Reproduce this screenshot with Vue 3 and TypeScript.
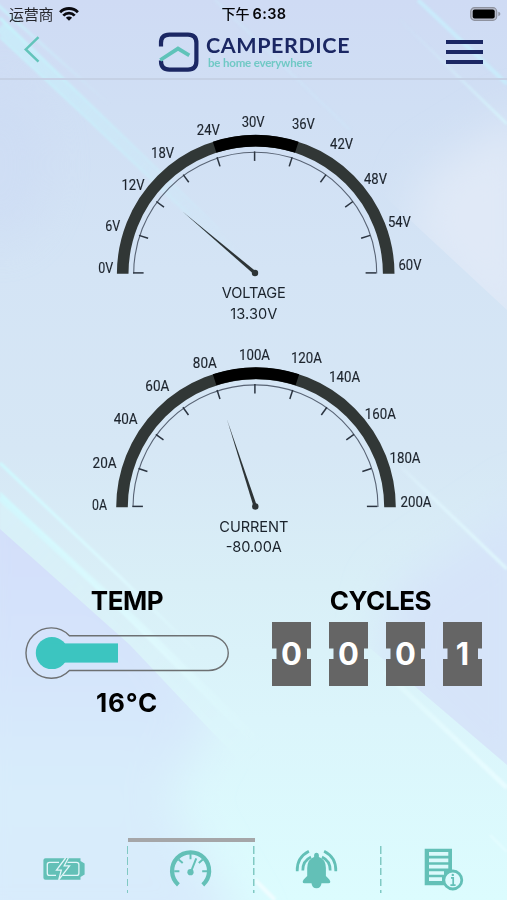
<script setup lang="ts">
interface Label { t: string; x: number; y: number; w: number }
interface Gauge {
  name: string
  value: string
  nameW: number
  valueW: number
  nameY: number
  valueY: number
  top: number
  height: number
  cx: number
  cy: number
  r: number
  tip: [number, number]
  labels: Label[]
}

const gauges: Gauge[] = [
  {
    name: 'VOLTAGE', value: '13.30V', nameW: 64, valueW: 47, nameY: 298.2, valueY: 318.7,
    top: 80, height: 250, cx: 255.7, cy: 273.8, r: 133, tip: [182.5, 211.5],
    labels: [
      { t: '0V', x: 105.7, y: 272.6, w: 15 },
      { t: '6V', x: 112.8, y: 231.2, w: 15 },
      { t: '12V', x: 133, y: 189.5, w: 23 },
      { t: '18V', x: 162.6, y: 157.5, w: 23 },
      { t: '24V', x: 208.3, y: 134.5, w: 23 },
      { t: '30V', x: 253.2, y: 126.7, w: 23 },
      { t: '36V', x: 303.4, y: 129, w: 23 },
      { t: '42V', x: 341.6, y: 149.2, w: 23 },
      { t: '48V', x: 375.5, y: 184.4, w: 23 },
      { t: '54V', x: 399.4, y: 226.6, w: 23 },
      { t: '60V', x: 410, y: 270.2, w: 23 }
    ]
  },
  {
    name: 'CURRENT', value: '-80.00A', nameW: 69, valueW: 56, nameY: 531.7, valueY: 552,
    top: 330, height: 235, cx: 256, cy: 507.3, r: 134, tip: [227, 419.5],
    labels: [
      { t: '0A', x: 99.6, y: 509.6, w: 15 },
      { t: '20A', x: 104.6, y: 467.5, w: 24 },
      { t: '40A', x: 125.7, y: 424.4, w: 24 },
      { t: '60A', x: 157.3, y: 391.2, w: 24 },
      { t: '80A', x: 204.8, y: 367.7, w: 24 },
      { t: '100A', x: 254.5, y: 360.2, w: 31 },
      { t: '120A', x: 306.4, y: 363.4, w: 31 },
      { t: '140A', x: 344.6, y: 382, w: 31 },
      { t: '160A', x: 380.3, y: 418.6, w: 31 },
      { t: '180A', x: 405, y: 462.6, w: 31 },
      { t: '200A', x: 416, y: 507, w: 31 }
    ]
  }
]

const point = (g: Gauge, radius: number, deg: number): [number, number] => {
  const a = (deg * Math.PI) / 180
  return [g.cx - radius * Math.cos(a), g.cy - radius * Math.sin(a)]
}

const arc = (g: Gauge, radius: number, from: number, to: number): string => {
  const [x1, y1] = point(g, radius, from)
  const [x2, y2] = point(g, radius, to)
  return `M${x1} ${y1}A${radius} ${radius} 0 0 1 ${x2} ${y2}`
}

const thinArc = (g: Gauge): string => {
  const rx = g.r - 11.5
  const x = g.cx - 0.5
  return `M${x - rx} ${g.cy - 0.4}A${rx} ${rx - 0.4} 0 0 1 ${x + rx} ${g.cy - 0.4}`
}

const tick = (g: Gauge, i: number): string => {
  const a = (i * 18 * Math.PI) / 180
  const x = g.cx - 1.1
  const y = g.cy - 0.9
  const r1 = g.r - 11.5
  const r2 = r1 - (i === 0 || i === 10 ? 10.5 : 9.5)
  return `M${x - r1 * Math.cos(a)} ${y - r1 * Math.sin(a)}L${x - r2 * Math.cos(a)} ${y - r2 * Math.sin(a)}`
}

const needle = (g: Gauge): string => {
  const x = g.cx - 0.7
  const y = g.cy - 0.8
  const dx = g.tip[0] - x
  const dy = g.tip[1] - y
  const len = Math.hypot(dx, dy)
  const nx = (-dy / len) * 1.7
  const ny = (dx / len) * 1.7
  return `M${x + nx} ${y + ny}L${g.tip[0]} ${g.tip[1]}L${x - nx} ${y - ny}Z`
}

const digits: string[] = ['0', '0', '0', '1']
const tabs: string[] = ['battery', 'gauge', 'alarm', 'report']
const active = 'gauge'
</script>

<template>
  <div class="screen">
    <svg class="backdrop" viewBox="0 0 507 900" aria-hidden="true">
      <defs>
        <linearGradient id="base" x1="0" y1="0" x2="0" y2="1">
          <stop offset="0" stop-color="#cfdbf4" />
          <stop offset=".12" stop-color="#d0dff4" />
          <stop offset=".3" stop-color="#d4e4f5" />
          <stop offset=".5" stop-color="#d6e7f5" />
          <stop offset=".65" stop-color="#d9eff7" />
          <stop offset=".8" stop-color="#dbf5fb" />
          <stop offset="1" stop-color="#dcfcfe" />
        </linearGradient>
        <linearGradient id="left" x1="0" y1="530" x2="0" y2="900" gradientUnits="userSpaceOnUse">
          <stop offset="0" stop-color="#d3dffa" />
          <stop offset=".35" stop-color="#d5e4fb" />
          <stop offset=".7" stop-color="#d8edfb" />
          <stop offset="1" stop-color="#d8ebfc" />
        </linearGradient>
        <linearGradient id="fadeA" x1="0" y1="20" x2="250" y2="270" gradientUnits="userSpaceOnUse">
          <stop offset="0" stop-color="#c6f3fc" />
          <stop offset=".4" stop-color="#c8effb" stop-opacity=".75" />
          <stop offset="1" stop-color="#cdeefb" stop-opacity="0" />
        </linearGradient>
        <linearGradient id="fadeA2" x1="0" y1="0" x2="110" y2="105" gradientUnits="userSpaceOnUse">
          <stop offset="0" stop-color="#c8effb" />
          <stop offset="1" stop-color="#cdeefb" stop-opacity="0" />
        </linearGradient>
        <linearGradient id="fadeB" x1="0" y1="460" x2="270" y2="740" gradientUnits="userSpaceOnUse">
          <stop offset="0" stop-color="#cdfaff" />
          <stop offset=".6" stop-color="#e0fcff" stop-opacity=".8" />
          <stop offset="1" stop-color="#e0fcff" stop-opacity="0" />
        </linearGradient>
        <linearGradient id="fadeB2" x1="0" y1="460" x2="200" y2="655" gradientUnits="userSpaceOnUse">
          <stop offset="0" stop-color="#cdfaff" />
          <stop offset=".6" stop-color="#defaff" stop-opacity=".9" />
          <stop offset="1" stop-color="#e0fcff" stop-opacity="0" />
        </linearGradient>
        <linearGradient id="fadeC" x1="380" y1="660" x2="507" y2="790" gradientUnits="userSpaceOnUse">
          <stop offset="0" stop-color="#e6fdff" stop-opacity=".3" />
          <stop offset="1" stop-color="#e8fcff" />
        </linearGradient>
        <linearGradient id="fadeD" x1="0" y1="500" x2="250" y2="760" gradientUnits="userSpaceOnUse">
          <stop offset="0" stop-color="#d8f0f8" />
          <stop offset="1" stop-color="#dbf3fa" stop-opacity="0" />
        </linearGradient>
        <linearGradient id="fadeE" x1="390" y1="10" x2="507" y2="124" gradientUnits="userSpaceOnUse">
          <stop offset="0" stop-color="#cdeafa" stop-opacity="0" />
          <stop offset="1" stop-color="#d6f2fb" />
        </linearGradient>
        <linearGradient id="fadeF" x1="395" y1="460" x2="507" y2="569" gradientUnits="userSpaceOnUse">
          <stop offset="0" stop-color="#def3fc" stop-opacity=".2" />
          <stop offset=".4" stop-color="#def3fc" />
          <stop offset="1" stop-color="#def5fc" />
        </linearGradient>
        <filter id="soft"><feGaussianBlur stdDeviation="1.1" /></filter>
        <filter id="softer" x="-50%" y="-50%" width="200%" height="200%"><feGaussianBlur stdDeviation="22" /></filter>
        <clipPath id="aboveTop"><path d="M257 78L507 310V0H257Z" /></clipPath>
        <clipPath id="aboveRight"><path d="M160 460L350 631L507 765V300H160Z" /></clipPath>
        <clipPath id="belowLeft"><path d="M0 529L130 645L215 735L380 900H0Z" /></clipPath>
      </defs>
      <rect width="507" height="900" fill="url(#base)" />
      <ellipse cx="0" cy="165" rx="50" ry="80" fill="#cbd9f4" opacity=".4" filter="url(#softer)" />
      <g clip-path="url(#aboveTop)">
        <path d="M425 175L530 110V370L410 235Z" fill="#e0e9f7" filter="url(#softer)" />
      </g>
      <g clip-path="url(#aboveRight)">
        <path d="M390 590L540 490V840L380 690Z" fill="#d6e4f9" filter="url(#softer)" />
      </g>
      <path d="M0 500L265 755L230 770L0 545Z" fill="url(#fadeD)" filter="url(#soft)" />
      <g clip-path="url(#belowLeft)">
        <path d="M-40 480H80L215 715L170 800L250 940H-40Z" fill="url(#left)" filter="url(#softer)" />
      </g>
      <g fill="none" stroke="url(#fadeA)" filter="url(#soft)">
        <path d="M0 27L250 270" stroke-width="11" opacity=".65" />
        <path d="M-10 -2L110 105" stroke="url(#fadeA2)" stroke-width="3" />
        <path d="M0 18L220 230" stroke-width="3" />
        <path d="M0 37L190 215" stroke-width="2" />
      </g>
      <g fill="none" stroke="url(#fadeB)" filter="url(#soft)">
        <path d="M0 463L120 577L200 655" stroke="url(#fadeB2)" stroke-width="3" />
        <path d="M0 497L130 616L265 748" stroke-width="7" opacity=".8" />
        <path d="M0 493L60 550L250 740" stroke-width="2" />
      </g>
      <g fill="none" filter="url(#soft)">
        <path d="M401 467L507 569" stroke="url(#fadeF)" stroke-width="3.5" />
        <path d="M385 672L507 788" stroke="url(#fadeC)" stroke-width="5" />
        <path d="M418 0L507 84" stroke="#c9ebfb" stroke-width="4" />
        <path d="M400 20L507 124" stroke="url(#fadeE)" stroke-width="3" />
        <path d="M215 0L350 130" stroke="#cfe4f8" stroke-width="3" opacity=".6" />
        <path d="M490 835L507 852" stroke="#e6fcff" stroke-width="3" opacity=".7" />
        <path d="M255 880L275 900" stroke="#effdff" stroke-width="4" />
      </g>
    </svg>

    <header class="top">
      <div class="status">
        <div class="carrier">
          <span>运营商</span>
          <svg width="20" height="14" viewBox="0 0 20 14">
            <g fill="none" stroke="#0a0a0f" stroke-width="2.8">
              <path d="M1.1 5.2A12.6 12.6 0 0 1 18.9 5.2" />
              <path d="M4.3 8.6A7.8 7.8 0 0 1 15.7 8.6" />
            </g>
            <path d="M6.9 10.7A4.4 4.4 0 0 1 13.1 10.7L10 13.8Z" fill="#0a0a0f" />
          </svg>
        </div>
        <div class="clock"><span class="ampm">下午</span><span class="time">6:38</span></div>
        <svg class="cell" width="31" height="14" viewBox="0 0 31 14">
          <rect x=".7" y=".7" width="26" height="12.6" rx="3.8" fill="#b8bdcc" stroke="#8e929f" stroke-width="1.2" />
          <rect x="2.7" y="2.5" width="22" height="9" rx="2" fill="#000" />
          <path d="M28.3 4.8Q30.4 5.4 30.4 7T28.3 9.2Z" fill="#9296a3" />
        </svg>
      </div>
      <div class="bar">
        <svg width="18" height="28" viewBox="0 0 18 28" role="img">
          <path d="M15.5 1.2L2.8 13.4L15.5 25.7" fill="none" stroke="#62c4ba" stroke-width="2.5" />
        </svg>
        <svg width="194" height="44" viewBox="157 30 194 44" role="img">
          <path d="M161 46.5V43Q161 34.6 169.4 34.6H188Q196.4 34.6 196.4 43V61Q196.4 69.6 188 69.6H169.4Q161 69.6 161 61V60.5" fill="none" stroke="#1b2763" stroke-width="4.2" />
          <path d="M160.3 60L178 48.6L189.3 55.3" fill="none" stroke="#5fc3b9" stroke-width="3.8" />
          <text class="brand" x="206" y="53.2" textLength="143.5" lengthAdjust="spacing">CAMPERDICE</text>
          <text class="tag" x="208" y="66.8" textLength="104.5" lengthAdjust="spacing">be home everywhere</text>
        </svg>
        <div class="burger"><i></i><i></i><i></i></div>
      </div>
    </header>

    <main>
      <svg
        v-for="g in gauges"
        :key="g.name"
        class="dial"
        width="507"
        :height="g.height"
        :viewBox="`0 ${g.top} 507 ${g.height}`"
      >
        <path :d="arc(g, g.r, 0, 180)" class="ring" />
        <path :d="arc(g, g.r, 72, 108)" class="ring mid" />
        <path :d="thinArc(g)" class="thin" />
        <path v-for="i in 11" :key="i" :d="tick(g, i - 1)" class="tick" />
        <path :d="needle(g)" class="needle" />
        <circle :cx="g.cx - 0.7" :cy="g.cy - 0.8" r="3.2" class="needle" />
        <text
          v-for="l in g.labels"
          :key="l.t"
          class="mark"
          :x="l.x - l.w / 2"
          :y="l.y"
          :textLength="l.w"
          lengthAdjust="spacingAndGlyphs"
        >{{ l.t }}</text>
        <text class="caption" :x="253.8 - g.nameW / 2" :y="g.nameY" :textLength="g.nameW">{{ g.name }}</text>
        <text class="caption" :x="253.8 - g.valueW / 2" :y="g.valueY" :textLength="g.valueW">{{ g.value }}</text>
      </svg>

      <div class="stats">
        <section class="temp">
          <h2>TEMP</h2>
          <svg width="206" height="54" viewBox="24 626 206 54">
            <path d="M69.4 635.7H208.5A19.8 17.4 0 0 1 208.5 670.5H69.4A25.2 25.2 0 1 1 69.4 635.7Z" fill="none" stroke="#6d7072" stroke-width="1.4" />
            <circle cx="51.9" cy="653" r="16.1" fill="#3cc5c0" />
            <rect x="51" y="643.4" width="67" height="19.2" fill="#3cc5c0" />
          </svg>
          <p>16°C</p>
        </section>
        <section class="cycles">
          <h2>CYCLES</h2>
          <div class="tiles">
            <span v-for="(d, i) in digits" :key="i" class="tile">{{ d }}</span>
          </div>
        </section>
      </div>
    </main>

    <nav class="tabs">
      <div v-for="t in tabs" :key="t" class="tab" :class="{ on: t === active }">
        <svg v-if="t === 'battery'" width="44" height="26" viewBox="42 856 44 26">
          <path d="M45.5 858.2H80.5V861L84.6 863.6V874.4L80.5 877V879.8H45.5Q43.4 879.8 43.4 877.8V860.2Q43.4 858.2 45.5 858.2Z" fill="#63c0b7" />
          <path d="M59 862.4H49.5Q47.3 862.4 47.3 864.6V873.2Q47.3 875.4 49.5 875.4H56M67.5 862.4H76.5Q78.9 862.4 78.9 864.6V873.2Q78.9 875.4 76.5 875.4H63" fill="none" stroke="#e4f6fa" stroke-width="1.3" />
          <path d="M65.6 858L56.5 870.2H61.3L58.7 879.8L69.5 865.8H64.2L68.3 858" fill="#63c0b7" stroke="#e4f6fa" stroke-width="1.3" />
        </svg>
        <svg v-else-if="t === 'gauge'" width="43" height="39" viewBox="168.7 850.5 44 40">
          <path d="M178.3 886.2A19 19 0 1 1 203.3 886.2" fill="none" stroke="#63c0b7" stroke-width="4.4" />
          <path d="M174 872.2H179.3M202.7 872.2H208M178.5 860.2L182.7 863.8M203.3 860.2L199.2 863.8M190.7 853V860" stroke="#63c0b7" stroke-width="2" />
          <path d="M190.8 873.6L196.6 859" stroke="#63c0b7" stroke-width="2" />
          <circle cx="190.7" cy="873.3" r="3.2" fill="#63c0b7" />
        </svg>
        <svg v-else-if="t === 'alarm'" width="44" height="42" viewBox="295.5 848 44 42">
          <path d="M317 852.7Q319.4 852.7 319.4 855.6V857Q326.2 859 326.4 868V876Q331 880 330.8 882Q330.6 883.2 329 883.2H322Q321.5 888.2 317 888.2T312 883.2H305Q303.3 883.2 303.2 882Q303 880 307.7 876V868Q308 859 314.6 857V855.6Q314.6 852.7 317 852.7Z" fill="#63c0b7" />
          <g fill="none" stroke="#63c0b7" stroke-width="2.7">
            <path d="M309.4 851.2Q297 857.5 297.7 871.2M311.5 857Q303 861 303.3 870.5M324.6 851.2Q337 857.5 336.3 871.2M322.5 857Q331 861 330.7 870.5" />
          </g>
        </svg>
        <svg v-else width="42" height="44" viewBox="423 847 42 44">
          <path d="M424.7 848.8H452V885.2H424.7Z" fill="#63c0b7" />
          <path d="M429 853.9H448.3M429 860.3H448.3M429 866.7H448.3M429 873H444M429 879.2H442" stroke="#dcf9fc" stroke-width="3.7" />
          <circle cx="452.8" cy="880" r="9" fill="#ddfafd" stroke="#63c0b7" stroke-width="2.8" />
          <path d="M451 877.8H453.2V885M450.4 885.2H455.6" fill="none" stroke="#63c0b7" stroke-width="1.7" />
          <circle cx="452.8" cy="874.9" r="1.2" fill="#63c0b7" />
        </svg>
      </div>
    </nav>
  </div>
</template>

<style>
body {
  margin: 0;
}
</style>

<style scoped>
.screen {
  position: relative;
  z-index: 0;
  display: flex;
  flex-direction: column;
  width: 507px;
  height: 900px;
  overflow: hidden;
  font-family: Inter, "Noto Sans CJK SC", sans-serif;
  color: #050508;
}
.backdrop {
  position: absolute;
  inset: 0;
  z-index: -1;
  width: 507px;
  height: 900px;
}
.top {
  display: flex;
  flex-direction: column;
  height: 78px;
  border-bottom: 2px solid #c5d1e5;
}
.status {
  display: grid;
  grid-template-columns: 1fr auto 1fr;
  align-items: center;
  height: 26px;
  padding: 0 6px 0 9px;
}
.carrier {
  display: flex;
  align-items: center;
  gap: 6px;
  font-size: 15px;
  line-height: 26px;
  font-family: "Noto Sans CJK SC", sans-serif;
  color: #25262c;
}
.carrier span {
  letter-spacing: -0.3px;
}
.clock {
  display: flex;
  align-items: center;
  gap: 3px;
  margin-right: 2px;
  line-height: 27px;
}
.ampm {
  font: 500 14px/27px "Noto Sans CJK SC", sans-serif;
}
.time {
  font-size: 14.5px;
  font-weight: 600;
  letter-spacing: 0.35px;
}
.cell {
  justify-self: end;
}
.bar {
  display: grid;
  grid-template-columns: 134px 1fr auto;
  align-items: start;
  padding: 4px 24.5px 0 23px;
}
.bar > svg:first-child {
  margin-top: 6px;
}
.burger {
  display: flex;
  flex-direction: column;
  gap: 6px;
  padding-top: 10px;
}
.burger i {
  width: 37px;
  height: 4px;
  background: #1b2763;
}
.brand {
  font: 700 21.5px Lato, sans-serif;
  fill: #1b2763;
}
.tag {
  font: 700 11.5px Lato, sans-serif;
  fill: #70c9c5;
}
main {
  flex: 1;
}
.dial {
  display: block;
}
.ring {
  fill: none;
  stroke: #313736;
  stroke-width: 11.6;
}
.ring.mid {
  stroke: #000;
}
.thin {
  fill: none;
  stroke: #596475;
  stroke-width: 1.1;
}
.tick {
  stroke: #2b3440;
  stroke-width: 1.5;
}
.needle {
  fill: #2d3436;
}
.mark {
  font: 400 15px Roboto, sans-serif;
  fill: #1d242d;
  stroke: #1d242d;
  stroke-width: 0.15;
}
.caption {
  font: 400 14.6px Inter, sans-serif;
  fill: #1a222b;
}
.stats {
  display: grid;
  grid-template-columns: 254px 253px;
  padding-top: 20px;
}
.temp,
.cycles {
  display: flex;
  flex-direction: column;
  align-items: center;
}
h2,
p {
  margin: 0;
  font-size: 26px;
  font-weight: 650;
  line-height: 32px;
  letter-spacing: -0.4px;
  color: #000;
}
.temp svg {
  margin-top: 9px;
}
.temp p {
  margin-top: 7px;
  letter-spacing: 0.8px;
}
.tiles {
  display: flex;
  gap: 18px;
  margin: 5px 7px 0 0;
}
.tile {
  width: 39px;
  height: 64px;
  background: #656565;
  clip-path: polygon(0 0, 100% 0, 100% 26.5px, 35px 26.5px, 35px 37px, 100% 37px, 100% 100%, 0 100%, 0 37px, 4.5px 37px, 4.5px 26.5px, 0 26.5px);
  color: #fff;
  font-size: 31px;
  font-weight: 650;
  line-height: 64px;
  text-align: center;
}
.tabs {
  display: grid;
  grid-template-columns: 128px 126.5px 127px 125.5px;
  height: 62px;
}
.tab {
  display: flex;
  align-items: center;
  justify-content: center;
  padding: 0 1.5px 4px 0;
  border-top: 4px solid transparent;
  background: repeating-linear-gradient(to bottom, #80c9c3 0 7.5px, transparent 7.5px 11px) right 4px / 1.5px 47px no-repeat;
}
.tab:first-child {
  padding-right: 0;
}
.tab:last-child {
  background: none;
}
.tab.on {
  border-top-color: #a5a6a8;
}
</style>
